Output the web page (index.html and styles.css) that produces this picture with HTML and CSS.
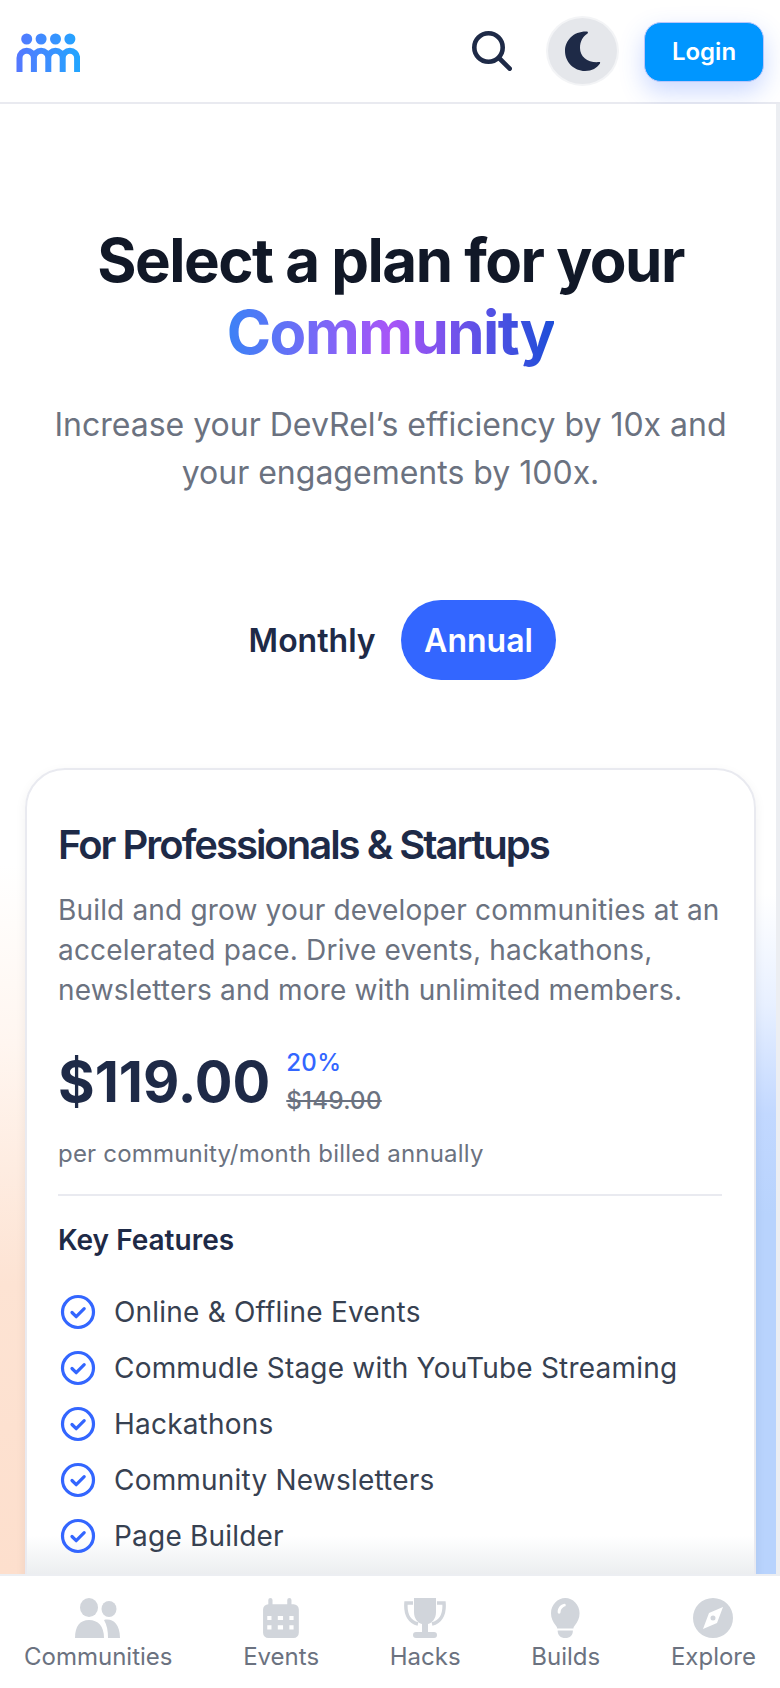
FILE: index.html
```html
<!DOCTYPE html>
<html lang="en">
<head>
  <meta charset="UTF-8" />
  <meta name="viewport" content="width=device-width, initial-scale=1.0"/>
  <title>Pricing</title>
  <link rel="stylesheet" href="styles.css">
</head>
<body>
  <header class="topbar">
    <svg class="logo" viewBox="0 0 64 39" aria-label="Commudle">
      <defs>
        <linearGradient id="logoGrad" gradientUnits="userSpaceOnUse" x1="0" x2="64" y1="0" y2="0">
          <stop offset="0" stop-color="#5577ff"/>
          <stop offset="1" stop-color="#22a6ff"/>
        </linearGradient>
      </defs>
      <g fill="url(#logoGrad)">
        <circle cx="10.700" cy="6" r="5.500"/>
        <circle cx="25.100" cy="6" r="5.500"/>
        <circle cx="39.500" cy="6" r="5.500"/>
        <circle cx="53.900" cy="6" r="5.500"/>
      </g>
      <path d="M3.500 39V25a7.200 7.200 0 0 1 14.400 0V39M17.900 25a7.200 7.200 0 0 1 14.400 0V39M32.300 25a7.200 7.200 0 0 1 14.400 0V39M46.700 25a7.200 7.200 0 0 1 14.400 0V39" fill="none" stroke="url(#logoGrad)" stroke-width="6"/>
    </svg>
    <div class="topbar-actions">
      <svg class="search-icon" viewBox="0 0 40 40" fill="none" stroke="#1e2a47" stroke-width="4.600" stroke-linecap="round">
        <circle cx="16.500" cy="16.500" r="14.200"/>
        <path d="M27 27 37.700 37.700"/>
      </svg>
      <button class="theme-btn" aria-label="Toggle theme">
        <svg viewBox="0 0 36 40" width="36" height="40"><path d="M22 0.500C9 0 0 9 0 20s9 20 20 20c7 0 12-3 15-7.500 .5-1-.2-1.500-1-1.400C23 32 15 26 15 17 15 10 18 5.500 22.500 2.500c.8-.7.5-2-.5-2z" fill="#1e2a47"/></svg>
      </button>
      <button class="login-btn">Login</button>
    </div>
  </header>

  <main class="page">
    <section class="intro">
      <h1>Select a plan for your <span class="grad-text">Community</span></h1>
      <p>Increase your DevRel’s efficiency by 10x and your engagements by 100x.</p>
    </section>

    <div class="billing-toggle">
      <span class="billing-option">Monthly</span>
      <span class="billing-option active">Annual</span>
    </div>

    <section class="plan-card">
      <h2>For Professionals &amp; Startups</h2>
      <p class="plan-desc">Build and grow your developer communities at an accelerated pace. Drive events, hackathons, newsletters and more with unlimited members.</p>
      <div class="price-row">
        <span class="price">$119.00</span>
        <div class="discount">
          <span class="discount-pct">20%</span>
          <s class="discount-old">$149.00</s>
        </div>
      </div>
      <p class="billing-note">per community/month billed annually</p>
      <hr class="divider">
      <h3>Key Features</h3>
      <ul class="features">
        <li><svg class="check" viewBox="0 0 36 36" fill="none" stroke="#3366ff" stroke-width="3.200" stroke-linecap="round" stroke-linejoin="round"><circle cx="18" cy="18" r="15.500"/><path d="M12 18.500l4.200 4.200 8-8"/></svg>Online &amp; Offline Events</li>
        <li><svg class="check" viewBox="0 0 36 36" fill="none" stroke="#3366ff" stroke-width="3.200" stroke-linecap="round" stroke-linejoin="round"><circle cx="18" cy="18" r="15.500"/><path d="M12 18.500l4.200 4.200 8-8"/></svg>Commudle Stage with YouTube Streaming</li>
        <li><svg class="check" viewBox="0 0 36 36" fill="none" stroke="#3366ff" stroke-width="3.200" stroke-linecap="round" stroke-linejoin="round"><circle cx="18" cy="18" r="15.500"/><path d="M12 18.500l4.200 4.200 8-8"/></svg>Hackathons</li>
        <li><svg class="check" viewBox="0 0 36 36" fill="none" stroke="#3366ff" stroke-width="3.200" stroke-linecap="round" stroke-linejoin="round"><circle cx="18" cy="18" r="15.500"/><path d="M12 18.500l4.200 4.200 8-8"/></svg>Community Newsletters</li>
        <li><svg class="check" viewBox="0 0 36 36" fill="none" stroke="#3366ff" stroke-width="3.200" stroke-linecap="round" stroke-linejoin="round"><circle cx="18" cy="18" r="15.500"/><path d="M12 18.500l4.200 4.200 8-8"/></svg>Page Builder</li>
      </ul>
    </section>
  </main>

  <nav class="bottom-nav">
    <a class="nav-item">
      <svg viewBox="0 0 46 40" height="40"><ellipse cx="14" cy="9.500" rx="9" ry="9.500"/><ellipse cx="34" cy="11" rx="7.500" ry="8"/><path d="M0 40c0-12 5-18 14-18s15 6 15 18z"/><path d="M29 22c7-2 16 2 16 18H33c0-7-1-13-4-18z"/></svg>
      Communities
    </a>
    <a class="nav-item">
      <svg viewBox="0 0 36 38" height="38"><path fill-rule="evenodd" d="M8 0a2 2 0 0 1 2 2v4h14V2a2 2 0 0 1 4 0v4h2a5 5 0 0 1 5 5v22a5 5 0 0 1-5 5H6a5 5 0 0 1-5-5V11a5 5 0 0 1 5-5V2a2 2 0 0 1 2-2zM5 17v4h4v-4zm10 0v4h5v-4zm11 0v4h4v-4zM5 26v4h4v-4zm10 0v4h5v-4zm11 0v4h4v-4z"/></svg>
      Events
    </a>
    <a class="nav-item">
      <svg viewBox="0 0 42 40" height="40"><path d="M10 0h22v14c0 7-4 11-8 12v8h6a3 3 0 0 1 0 6H12a3 3 0 0 1 0-6h6v-8c-4-1-8-5-8-12z"/><path d="M9 5H2C1 17 6 24 14 26" fill="none" stroke="#d1d5db" stroke-width="3.500"/><path d="M33 5h7c1 12-4 19-12 21" fill="none" stroke="#d1d5db" stroke-width="3.500"/></svg>
      Hacks
    </a>
    <a class="nav-item">
      <svg viewBox="0 0 30 42" height="42"><path fill-rule="evenodd" d="M15 0c8 0 15 7 15 16 0 5-2 9-5 13-1 1-1.500 2-1.500 3h-17c0-1-.5-2-1.500-3C2 25 0 21 0 16 0 7 7 0 15 0zm-1 6c-4 1-7 4-7 9a1.500 1.500 0 0 0 3 0c0-3 2-5 4-6a1.500 1.500 0 0 0 0-3z"/><path d="M7 34h16c0 5-3 8-8 8s-8-3-8-8z"/></svg>
      Builds
    </a>
    <a class="nav-item">
      <svg viewBox="0 0 40 40" height="40"><path fill-rule="evenodd" d="M20 0a20 20 0 1 1 0 40 20 20 0 0 1 0-40zm10 9L16 15l-6 16 14-6zM20 17.500a2.500 2.500 0 1 1 0 5 2.500 2.500 0 0 1 0-5z"/></svg>
      Explore
    </a>
  </nav>
</body>
</html>
```

FILE: styles.css
```css
:root {
  --navy: #1e2a47;
  --dark: #111827;
  --muted: #6b7280;
  --blue: #3366ff;
  --line: #e9eaf0;
}

* {
  box-sizing: border-box;
}

html, body {
  height: 100%;
}

body {
  margin: 0;
  display: flex;
  flex-direction: column;
  overflow: hidden;
  background: white;
  color: var(--navy);
  font-family: Inter, sans-serif;
}

.topbar {
  flex: none;
  height: 104px;
  display: flex;
  align-items: center;
  justify-content: space-between;
  padding: 0 16px;
  border-bottom: 2px solid var(--line);
  background: white;
}

.logo {
  width: 64px;
  height: 39px;
  margin-top: 3px;
}

.topbar-actions {
  display: flex;
  align-items: center;
}

.search-icon {
  width: 40px;
  height: 40px;
  margin-right: 34px;
}

.theme-btn {
  width: 73px;
  height: 70px;
  display: flex;
  align-items: center;
  justify-content: center;
  padding: 0;
  border: 2px solid #f3f4f6;
  border-radius: 50%;
  background: #e5e7eb;
  margin-right: 25px;
}

.login-btn {
  width: 120px;
  height: 60px;
  margin-top: 2px;
  padding: 0 0 2px;
  border: 1px solid #b9c6fb;
  border-radius: 17px;
  background: #0096ff;
  color: white;
  font: 600 24px Inter, sans-serif;
  box-shadow: 0 10px 24px rgba(51, 102, 255, 0.25);
}

.page {
  flex: 1;
  min-height: 0;
  overflow: hidden;
  border-right: 4px solid #eceef2;
  padding: 0 20px 0 25px;
  background:
    linear-gradient(to bottom, white 760px, #fff6f0 940px, #fde3d3 1180px, #fddfcd 100%) left top / 50% 100% no-repeat,
    linear-gradient(to bottom, white 790px, #e8f0ff 900px, #c2d8ff 1010px, #b8d3fd 1110px, #b8d3fd 100%) right top / 50% 100% no-repeat;
}

.intro {
  text-align: center;
  padding: 120px 20px 0;
}

h1 {
  margin: 0;
  font-size: 60px;
  line-height: 72px;
  font-weight: 700;
  letter-spacing: -1.500px;
  color: var(--dark);
}

.grad-text {
  display: block;
  background: linear-gradient(90deg, #3b82f6 0%, #a855f7 50%, #1d4ed8 100%);
  background-clip: text;
  -webkit-background-clip: text;
  color: transparent;
  width: fit-content;
  margin: 0 auto;
}

.intro p {
  margin: 33px 0 0;
  font-size: 32px;
  line-height: 48px;
  color: var(--muted);
}

.billing-toggle {
  display: flex;
  align-items: center;
  justify-content: center;
  gap: 25px;
  margin-top: 103px;
  padding-left: 24px;
}

.billing-option {
  font-size: 32px;
  font-weight: 600;
}

.billing-option.active {
  display: flex;
  align-items: center;
  height: 80px;
  padding: 0 23.500px;
  border-radius: 40px;
  background: var(--blue);
  color: white;
}

.plan-card {
  margin-top: 88px;
  height: 900px;
  padding: 53px 32px 0 31px;
  background: linear-gradient(to bottom, white 766px, #eceef0 804px);
  border: 2px solid var(--line);
  border-radius: 40px;
  box-shadow: 0 4px 12px rgba(0, 0, 0, 0.06);
}

h2 {
  margin: 0;
  font-size: 40px;
  line-height: 44px;
  font-weight: 600;
  letter-spacing: -2px;
}

.plan-desc {
  margin: 23px 0 0;
  font-size: 28px;
  line-height: 40px;
  letter-spacing: 0.170px;
  color: var(--muted);
}

.price-row {
  display: flex;
  align-items: center;
  gap: 16px;
  margin-top: 34px;
}

.price {
  font-size: 56px;
  line-height: 72px;
  font-weight: 700;
}

.discount {
  display: flex;
  flex-direction: column;
  font-size: 24px;
  line-height: 38px;
  font-weight: 500;
  letter-spacing: 0.300px;
}

.discount-pct {
  color: var(--blue);
}

.discount-old {
  color: var(--muted);
}

.billing-note {
  margin: 18px 0 0;
  font-size: 24px;
  line-height: 32px;
  letter-spacing: 0.200px;
  color: var(--muted);
}

.divider {
  margin: 24px 0 0;
  border: 0;
  border-top: 2px solid var(--line);
}

h3 {
  margin: 26px 0 0;
  font-size: 28px;
  line-height: 36px;
  font-weight: 600;
}

.features {
  list-style: none;
  margin: 26px 0 0;
  padding: 0;
}

.features li {
  display: flex;
  align-items: center;
  gap: 18px;
  height: 56px;
  padding-left: 2px;
  font-size: 28px;
  letter-spacing: 0.200px;
  color: #374151;
}

.check {
  width: 36px;
  height: 36px;
  flex: none;
}

.bottom-nav {
  flex: none;
  height: 114px;
  display: flex;
  justify-content: space-between;
  padding: 22px 24px 0 24px;
  background: white;
  border-top: 2px solid #eceef2;
}

.nav-item {
  display: flex;
  flex-direction: column;
  align-items: center;
  font-size: 24px;
  line-height: 30px;
  color: var(--muted);
}

.nav-item svg {
  fill: #d1d5db;
  height: 40px;
  margin-bottom: 4px;
}
```
